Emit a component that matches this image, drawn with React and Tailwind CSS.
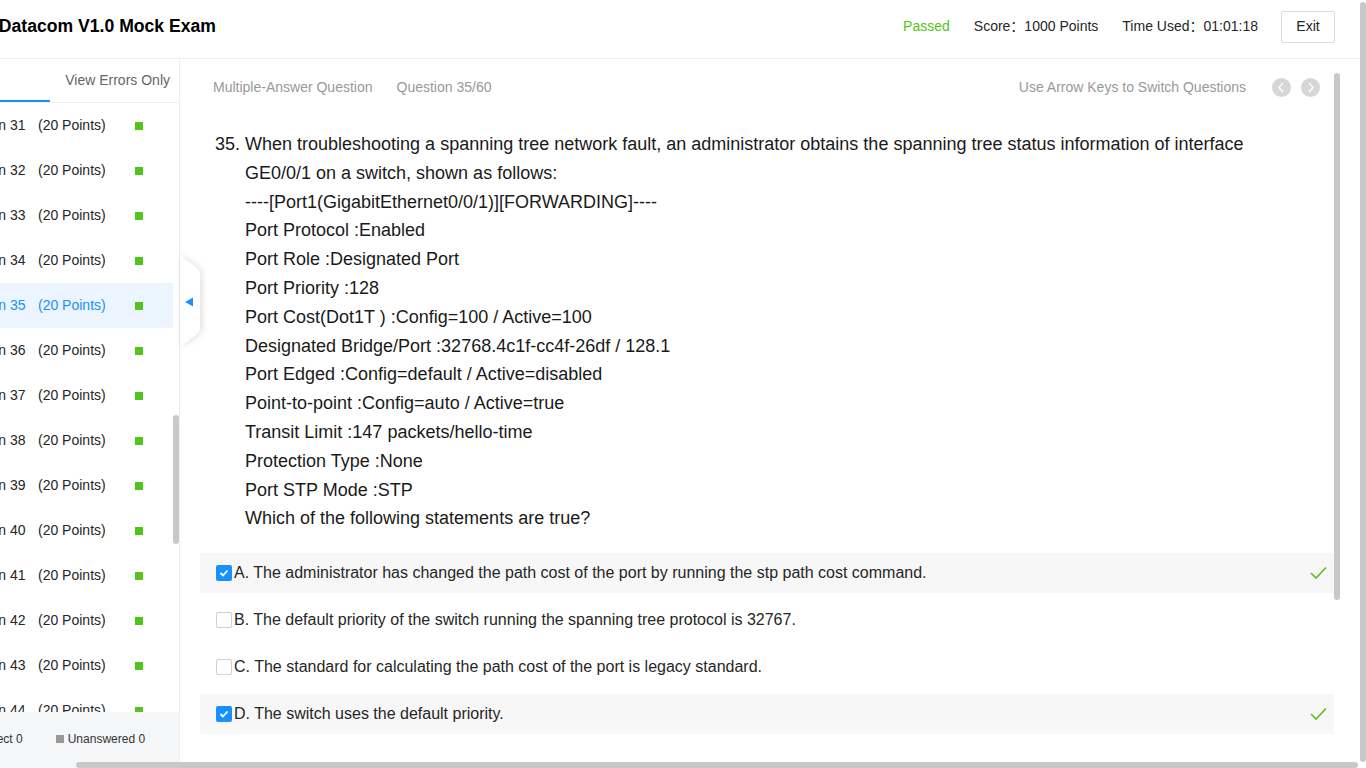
import React from 'react';

const rows = [31, 32, 33, 34, 35, 36, 37, 38, 39, 40, 41, 42, 43, 44];

const stemLines = [
  'GE0/0/1 on a switch, shown as follows:',
  '----[Port1(GigabitEthernet0/0/1)][FORWARDING]----',
  'Port Protocol :Enabled',
  'Port Role :Designated Port',
  'Port Priority :128',
  'Port Cost(Dot1T ) :Config=100 / Active=100',
  'Designated Bridge/Port :32768.4c1f-cc4f-26df / 128.1',
  'Port Edged :Config=default / Active=disabled',
  'Point-to-point :Config=auto / Active=true',
  'Transit Limit :147 packets/hello-time',
  'Protection Type :None',
  'Port STP Mode :STP',
  'Which of the following statements are true?',
];

const options = [
  { key: 'A', text: 'The administrator has changed the path cost of the port by running the stp path cost command.', checked: true },
  { key: 'B', text: 'The default priority of the switch running the spanning tree protocol is 32767.', checked: false },
  { key: 'C', text: 'The standard for calculating the path cost of the port is legacy standard.', checked: false },
  { key: 'D', text: 'The switch uses the default priority.', checked: true },
];

const Chevron = ({ dir }) => (
  <svg width="19" height="19" viewBox="0 0 19 19">
    <circle cx="9.5" cy="9.5" r="9.5" fill="#d6d6d6" />
    {dir === 'left' ? (
      <path d="M11 5 L7 9.5 L11 14" fill="none" stroke="#fff" strokeWidth="1.4" />
    ) : (
      <path d="M8 5 L12 9.5 L8 14" fill="none" stroke="#fff" strokeWidth="1.4" />
    )}
  </svg>
);

const CheckBox = ({ checked }) =>
  checked ? (
    <span className="w-4 h-4 rounded-[2px] bg-[#1890ff] flex items-center justify-center shrink-0">
      <svg width="12" height="12" viewBox="0 0 12 12">
        <path d="M2.5 6 L5 8.5 L9.5 3.5" fill="none" stroke="#fff" strokeWidth="1.8" />
      </svg>
    </span>
  ) : (
    <span className="w-4 h-4 rounded-[2px] border border-[#d0d0d0] bg-white shrink-0" />
  );

export default function App() {
  return (
    <div className="relative w-[1366px] h-[768px] overflow-hidden bg-white text-[#262626] font-['Liberation_Sans','Noto_Sans_CJK_SC',Arial,sans-serif]">
      <div className="flex flex-col h-full pr-[6px]">
        {/* Header */}
        <header className="h-[59px] shrink-0 flex items-center pb-[5px] border-b border-[#eeeeee]">
          <h1 className="-ml-[50px] text-[17.6px] font-bold text-black whitespace-nowrap">HCIA-Datacom V1.0 Mock Exam</h1>
          <div className="ml-auto flex items-center text-[14px] pr-[25px]">
            <span className="text-[#52c41a]">Passed</span>
            <span className="ml-[24px]">Score：1000 Points</span>
            <span className="ml-[24px]">Time Used：01:01:18</span>
            <button className="ml-[23px] w-[54px] h-[32px] border border-[#dcdcdc] rounded-[2px] bg-white text-[14px] text-[#262626]">
              Exit
            </button>
          </div>
        </header>

        <div className="flex flex-1 min-h-0">
          {/* Sidebar */}
          <aside className="relative w-[180px] shrink-0 border-r border-[#eeeeee] flex flex-col overflow-hidden">
            <div className="h-[44px] shrink-0 flex items-center border-b border-[#eeeeee] relative">
              <span className="ml-auto mr-[9px] text-[14px] text-[#666]">View Errors Only</span>
              <div className="absolute left-0 bottom-0 w-[50px] h-[2px] bg-[#1890ff]" />
            </div>
            <div className="relative flex-1 min-h-0 overflow-hidden pr-[6px]">
              {rows.map((n) => {
                const active = n === 35;
                return (
                  <div
                    key={n}
                    className={`h-[45px] flex items-center text-[14px] whitespace-nowrap ${
                      active ? 'bg-[#ebf4ff] text-[#1890ff]' : 'text-[#262626]'
                    }`}
                  >
                    <span className="-ml-[50px] w-[88px] shrink-0">Question {n}</span>
                    <span className="w-[97px] shrink-0">(20 Points)</span>
                    <span className="w-2 h-2 bg-[#52c41a] shrink-0" />
                  </div>
                );
              })}
              <div className="absolute left-[173px] top-[312px] w-[6px] h-[129px] rounded-full bg-[#c8c8c8]" />
            </div>
            <div className="h-[56px] shrink-0 bg-[#f5f6f8] flex items-start pt-[18px] text-[12px] text-[#333] whitespace-nowrap">
              <span className="-ml-[46px] flex items-center">
                <span className="w-2 h-2 bg-[#f5222d] mr-[4px]" />
                Incorrect 0
              </span>
              <span className="ml-[33px] flex items-center">
                <span className="w-2 h-2 bg-[#999] mr-[4px]" />
                Unanswered 0
              </span>
            </div>
          </aside>

          {/* Main */}
          <main className="relative flex-1 min-w-0 flex flex-col">
            <div className="h-[56px] shrink-0 flex items-center pl-[33px] pr-[40px] text-[14px] text-[#999]">
              <span>Multiple-Answer Question</span>
              <span className="ml-[24px]">Question 35/60</span>
              <span className="ml-auto">Use Arrow Keys to Switch Questions</span>
              <span className="ml-[26px]"><Chevron dir="left" /></span>
              <span className="ml-[10px]"><Chevron dir="right" /></span>
            </div>

            <div className="flex-1 min-h-0 pl-[20px] pr-[26px] pt-[15px]">
              <div className="flex pl-[15px] text-[18px] leading-[28.8px] text-[#1a1a1a] whitespace-nowrap">
                <span className="w-[30px] shrink-0">35.</span>
                <div>
                  <p>When troubleshooting a spanning tree network fault, an administrator obtains the spanning tree status information of interface</p>
                  {stemLines.map((l, i) => (
                    <p key={i}>{l}</p>
                  ))}
                </div>
              </div>

              <div className="mt-[20px] flex flex-col gap-[7px]">
                {options.map((o) => (
                  <div
                    key={o.key}
                    className={`h-[40px] flex items-center pl-[16px] pr-[7px] text-[16px] text-[#262626] ${
                      o.checked ? 'bg-[#f7f7f7]' : ''
                    }`}
                  >
                    <CheckBox checked={o.checked} />
                    <span className="ml-[2px]">
                      {o.key}. {o.text}
                    </span>
                    {o.checked && (
                      <svg className="ml-auto" width="17" height="14" viewBox="0 0 17 14">
                        <path d="M1 7 L6 12 L16 1.5" fill="none" stroke="#52c41a" strokeWidth="1.6" />
                      </svg>
                    )}
                  </div>
                ))}
              </div>
            </div>

            {/* content scrollbar */}
            <div className="absolute left-[1154px] top-[14px] w-[6px] h-[527px] rounded-full bg-[#c8c8c8]" />
          </main>
        </div>
      </div>

      {/* sidebar collapse handle */}
      <div className="absolute left-[180px] top-[255px] w-[24px] h-[92px]">
        <svg width="24" height="92" viewBox="0 0 24 92" className="drop-shadow-[2px_0_3px_rgba(0,0,0,0.12)]">
          <path d="M0 0 L16 12 Q20 15 20 20 L20 72 Q20 77 16 80 L0 92 Z" fill="#fff" />
          <path d="M5 47 L13 42.5 L13 51.5 Z" fill="#1890ff" />
        </svg>
      </div>

      {/* page scrollbars */}
      <div className="absolute right-0 top-[2px] w-[6px] h-[760px] rounded-full bg-[#c8c8c8]" />
      <div className="absolute left-[76px] bottom-0 w-[1282px] h-[6px] rounded-full bg-[#c8c8c8]" />
    </div>
  );
}
